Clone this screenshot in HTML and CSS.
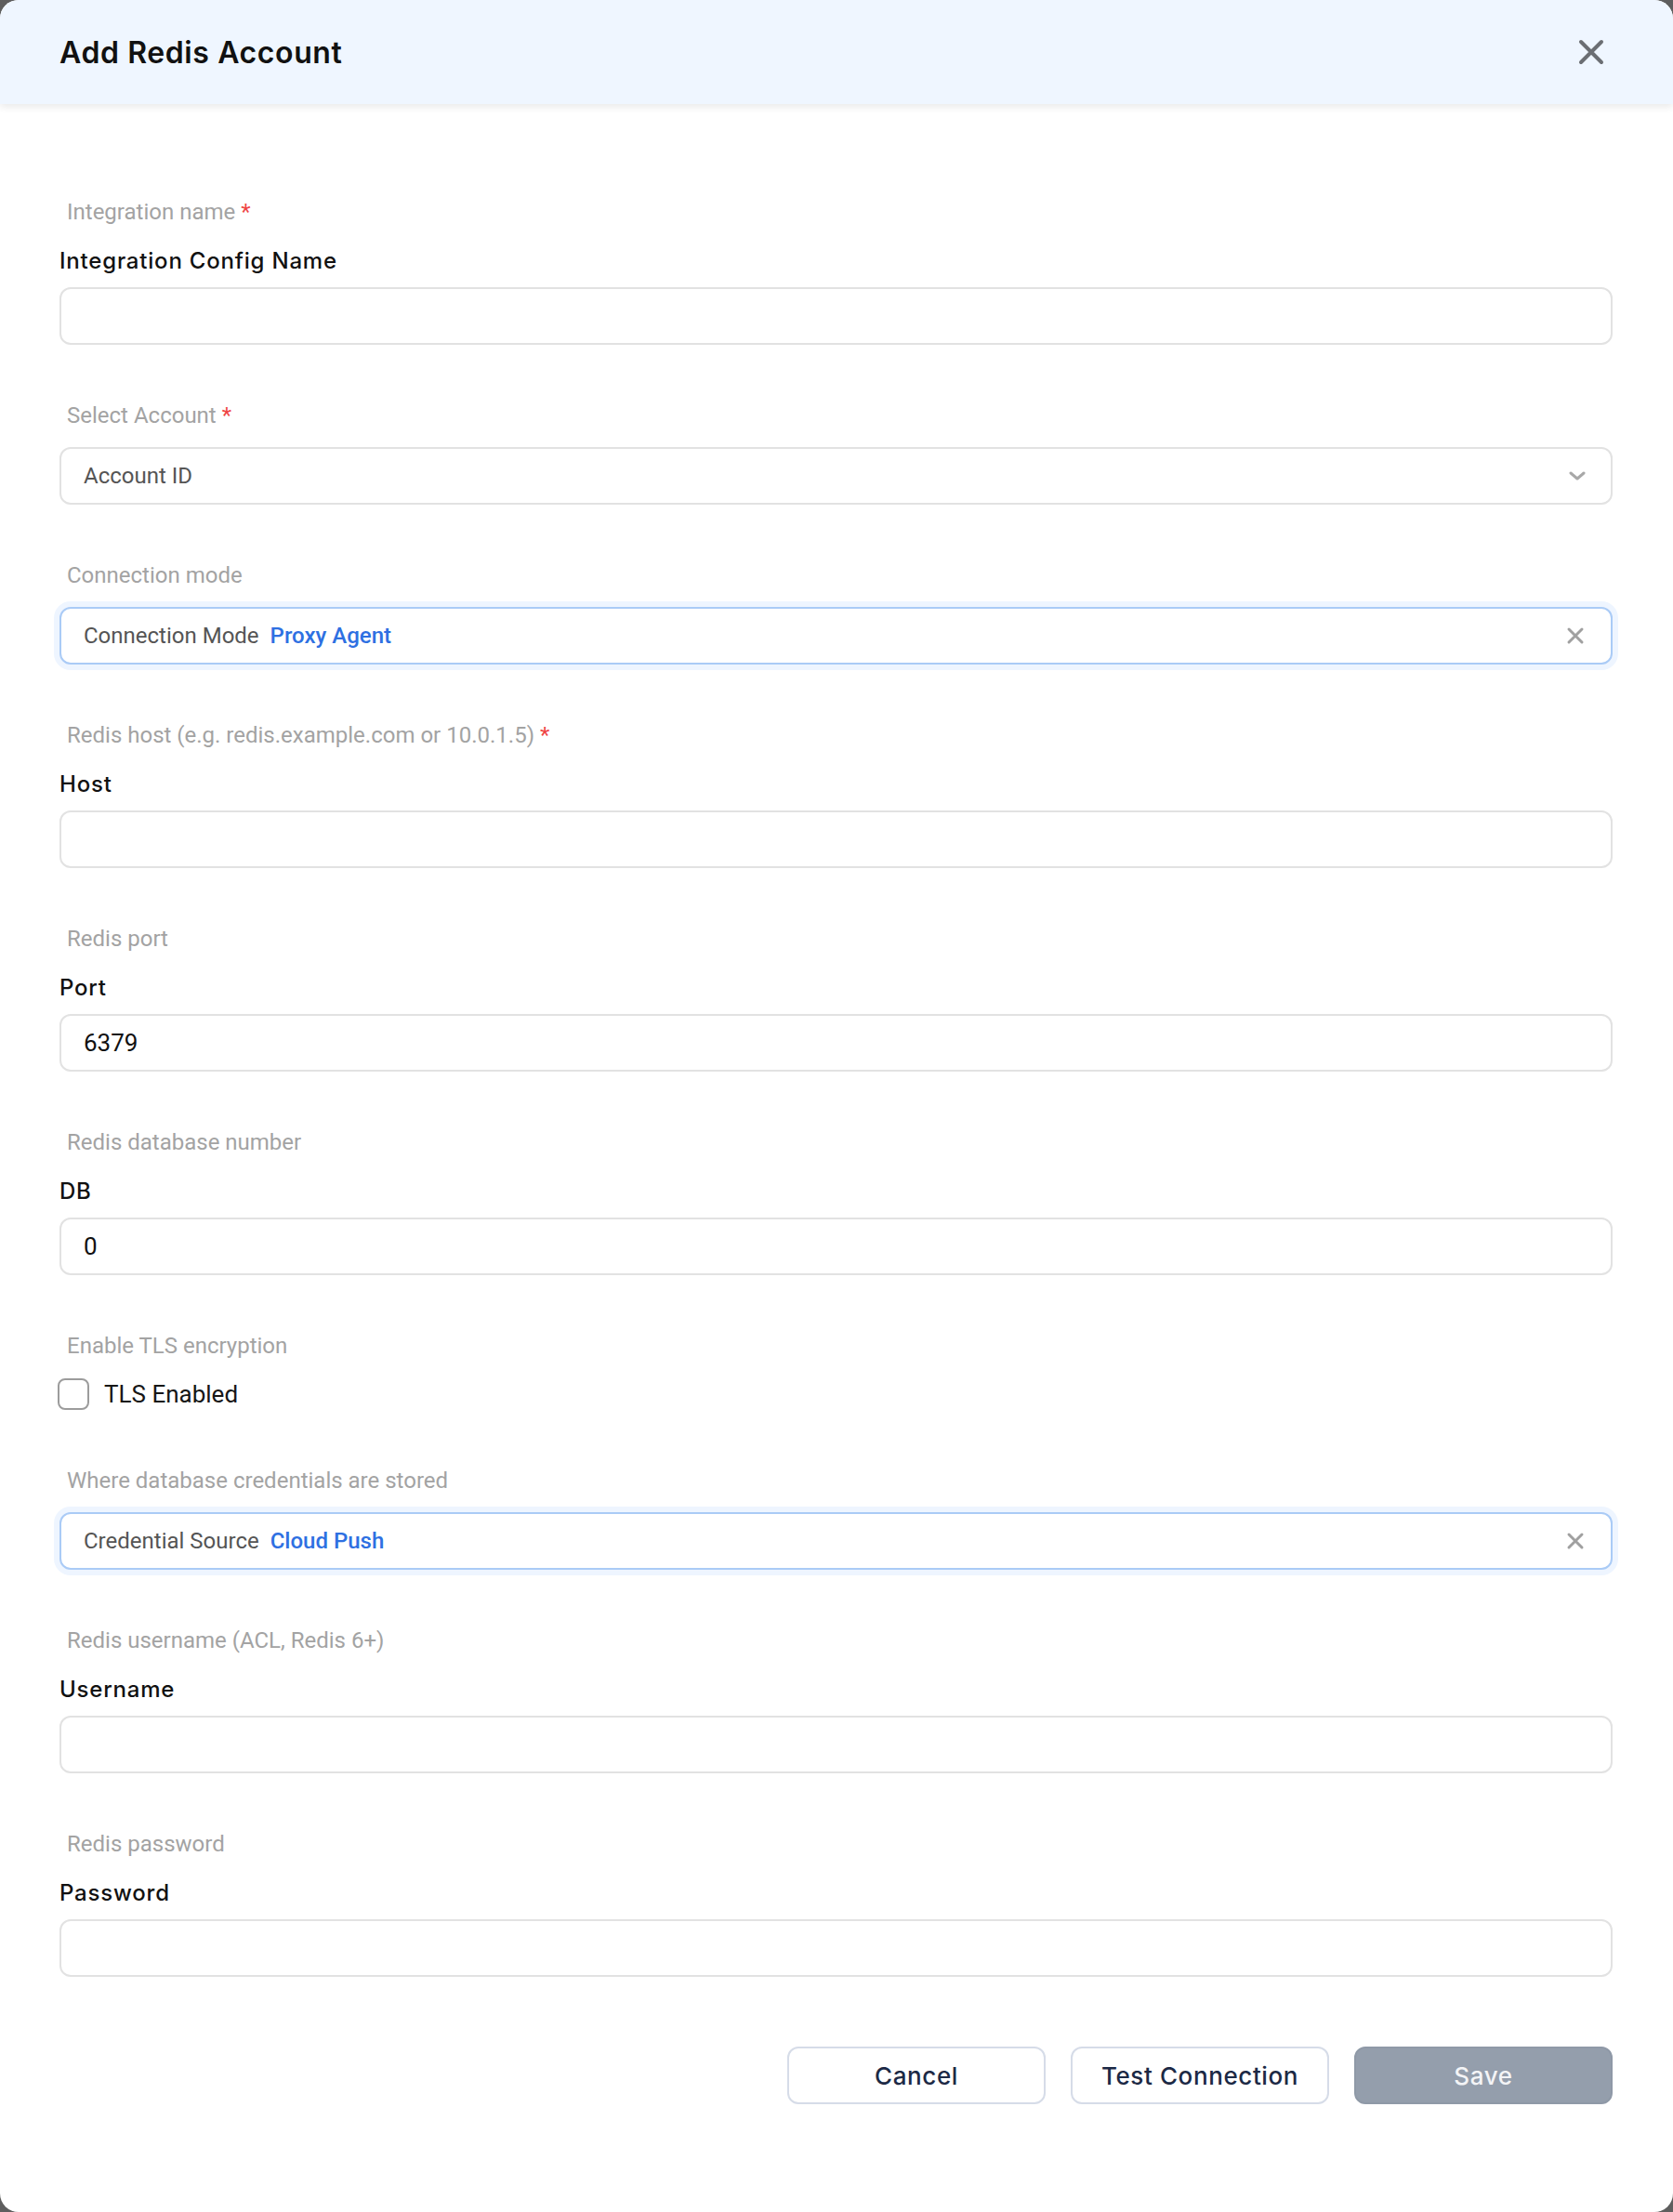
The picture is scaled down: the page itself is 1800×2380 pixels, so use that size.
FILE: index.html
```html
<!DOCTYPE html>
<html lang="en">
<head>
<meta charset="utf-8">
<title>Add Redis Account</title>
<link rel="stylesheet" href="styles.css">
</head>
<body>
<div class="modal">
  <header class="modal-header">
    <h1 class="modal-title">Add Redis Account</h1>
    <button class="close-btn" aria-label="Close">
      <svg width="28" height="28" viewBox="0 0 28 28"><path d="M3 3 L25 25 M25 3 L3 25" stroke="#6b6e73" stroke-width="4" stroke-linecap="round" fill="none"/></svg>
    </button>
  </header>
  <main class="modal-body">
    <div class="group">
      <div class="helper">Integration name <span class="req">*</span></div>
      <div class="field-label">Integration Config Name</div>
      <div class="input"></div>
    </div>
    <div class="group">
      <div class="helper">Select Account <span class="req">*</span></div>
      <div class="input select">
        <span class="value muted">Account ID</span>
        <svg class="chev" width="20" height="12" viewBox="0 0 20 12"><path d="M3 3 L10 9 L17 3" stroke="#a8a8a8" stroke-width="3" stroke-linecap="round" stroke-linejoin="round" fill="none"/></svg>
      </div>
    </div>
    <div class="group">
      <div class="helper">Connection mode</div>
      <div class="input chosen">
        <span class="value muted">Connection Mode</span><span class="tag">Proxy Agent</span>
        <svg class="clear" width="20" height="20" viewBox="0 0 20 20"><path d="M3 3 L17 17 M17 3 L3 17" stroke="#a0a0a0" stroke-width="3" stroke-linecap="round" fill="none"/></svg>
      </div>
    </div>
    <div class="group">
      <div class="helper">Redis host (e.g. redis.example.com or 10.0.1.5) <span class="req">*</span></div>
      <div class="field-label">Host</div>
      <div class="input"></div>
    </div>
    <div class="group">
      <div class="helper">Redis port</div>
      <div class="field-label">Port</div>
      <div class="input"><span class="value">6379</span></div>
    </div>
    <div class="group">
      <div class="helper">Redis database number</div>
      <div class="field-label">DB</div>
      <div class="input"><span class="value">0</span></div>
    </div>
    <div class="group">
      <div class="helper">Enable TLS encryption</div>
      <label class="check-row"><span class="checkbox"></span><span class="check-text">TLS Enabled</span></label>
    </div>
    <div class="group">
      <div class="helper">Where database credentials are stored</div>
      <div class="input chosen">
        <span class="value muted">Credential Source</span><span class="tag">Cloud Push</span>
        <svg class="clear" width="20" height="20" viewBox="0 0 20 20"><path d="M3 3 L17 17 M17 3 L3 17" stroke="#a0a0a0" stroke-width="3" stroke-linecap="round" fill="none"/></svg>
      </div>
    </div>
    <div class="group">
      <div class="helper">Redis username (ACL, Redis 6+)</div>
      <div class="field-label">Username</div>
      <div class="input"></div>
    </div>
    <div class="group">
      <div class="helper">Redis password</div>
      <div class="field-label">Password</div>
      <div class="input"></div>
    </div>
    <div class="actions">
      <button class="btn btn-outline">Cancel</button>
      <button class="btn btn-outline">Test Connection</button>
      <button class="btn btn-disabled">Save</button>
    </div>
  </main>
</div>
</body>
</html>
```
FILE: styles.css
```css
html, body {
  margin: 0;
  padding: 0;
  background: #5e5e5e;
}
.modal {
  width: 1800px;
  min-height: 2380px;
  background: #ffffff;
  border-radius: 20px;
  overflow: hidden;
  font-family: Roboto, "Liberation Sans", sans-serif;
}
.modal-header {
  height: 112px;
  background: #eff6ff;
  display: flex;
  align-items: center;
  justify-content: space-between;
  padding: 0 74px 0 64px;
  box-sizing: border-box;
  box-shadow: 0 3px 8px rgba(0, 0, 0, 0.09);
  position: relative;
}
.modal-title {
  margin: 0;
  font-family: Inter, "Open Sans", sans-serif;
  font-weight: 600;
  font-size: 32px;
  color: #111111;
  letter-spacing: 0.6px;
}
.close-btn {
  border: 0;
  background: transparent;
  padding: 0;
  width: 28px;
  height: 28px;
  display: flex;
}
.modal-body {
  padding: 101px 65px 0 64px;
  display: flex;
  flex-direction: column;
  gap: 61px;
}
.group {
  display: flex;
  flex-direction: column;
}
.helper {
  font-size: 24px;
  line-height: 30px;
  color: #a3a3a3;
  padding-left: 8px;
  margin-bottom: 19px;
}
.req {
  color: #ef4444;
}
.field-label {
  font-family: Inter, "Open Sans", sans-serif;
  font-weight: 500;
  font-size: 24px;
  letter-spacing: 0.8px;
  line-height: 30px;
  color: #111111;
  margin-top: 4px;
  margin-bottom: 13px;
}
.input {
  height: 62px;
  box-sizing: border-box;
  border: 2px solid #e2e2e2;
  border-radius: 12px;
  display: flex;
  align-items: center;
  padding: 0 24px;
  background: #fff;
}
.value {
  font-size: 26px;
  color: #111111;
}
.value.muted {
  font-size: 24px;
  color: #555555;
}
.select {
  justify-content: space-between;
  padding-right: 26px;
}
.chosen {
  border-color: #aacbf6;
  box-shadow: 0 0 0 6px #eef5ff;
  padding-right: 28px;
}
.tag {
  font-size: 24px;
  font-weight: 500;
  color: #2e70e2;
  margin-left: 12px;
}
.clear {
  margin-left: auto;
}
.check-row {
  display: flex;
  align-items: center;
  margin-top: 1px;
  margin-left: -2px;
}
.checkbox {
  width: 34px;
  height: 34px;
  box-sizing: border-box;
  border: 2px solid #9c9c9c;
  border-radius: 8px;
  background: #fff;
}
.check-text {
  font-size: 26px;
  color: #161616;
  margin-left: 16px;
}
.actions {
  display: flex;
  justify-content: flex-end;
  gap: 27px;
  margin-top: 14px;
}
.btn {
  width: 278px;
  height: 62px;
  box-sizing: border-box;
  border-radius: 12px;
  font-family: Inter, "Open Sans", sans-serif;
  font-weight: 500;
  font-size: 26px;
  letter-spacing: 0.6px;
}
.btn-outline {
  background: #ffffff;
  border: 2px solid #d6dce8;
  color: #1c2945;
}
.btn-disabled {
  background: #949eac;
  border: 2px solid #8f99a7;
  color: #f3f4f6;
}
```
